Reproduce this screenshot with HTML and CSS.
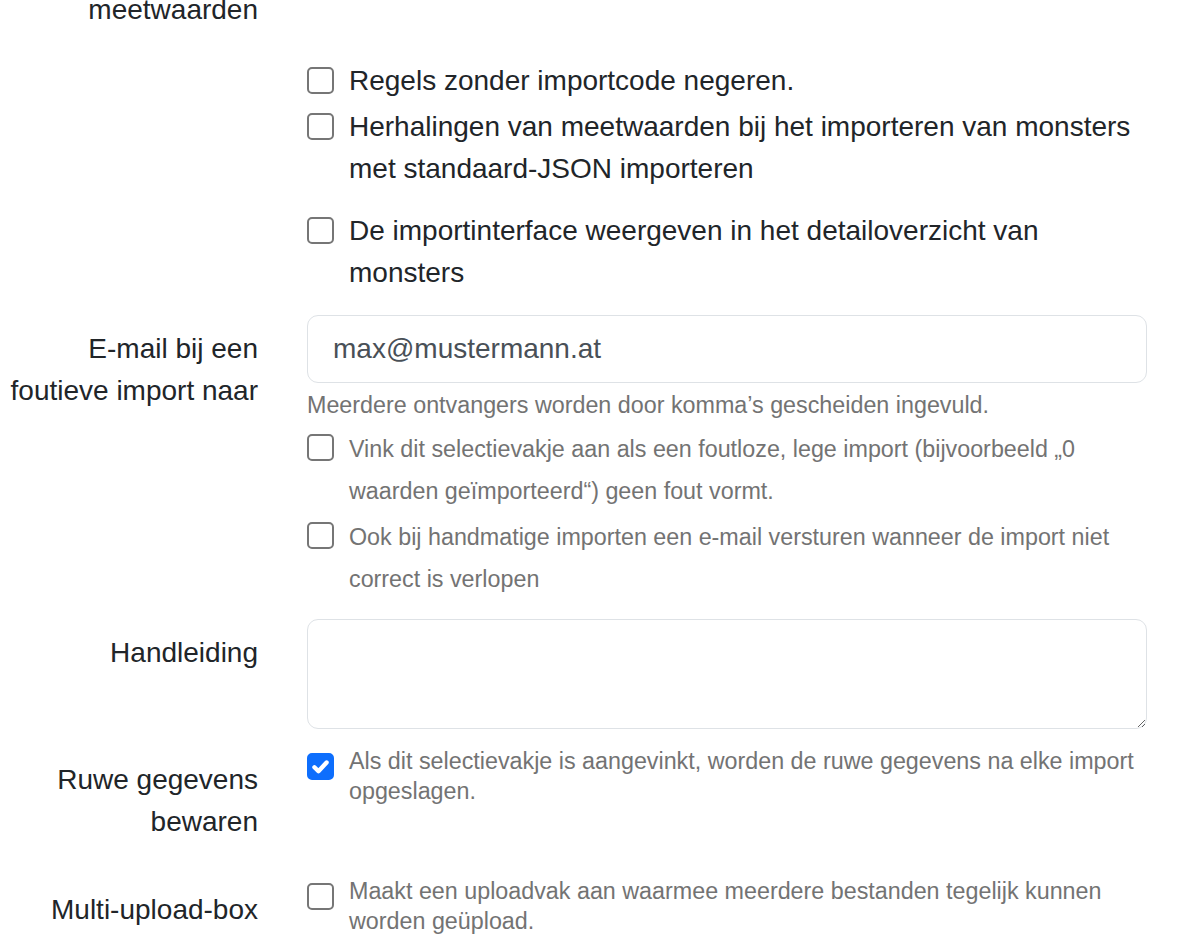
FILE: index.html
```html
<!DOCTYPE html>
<html lang="nl">
<head>
<meta charset="utf-8">
<title>Import instellingen</title>
<link rel="stylesheet" href="styles.css">
</head>
<body>
<form class="form">
  <div class="row row-top">
    <div class="label">meetwaarden</div>
    <div class="field"></div>
  </div>

  <div class="row row-checks">
    <div class="label"></div>
    <div class="field">
      <label class="check">
        <span class="box"></span>
        <span class="check-text">Regels zonder importcode negeren.</span>
      </label>
      <label class="check check-spaced">
        <span class="box"></span>
        <span class="check-text">Herhalingen van meetwaarden bij het importeren van monsters met standaard-JSON importeren</span>
      </label>
      <label class="check">
        <span class="box"></span>
        <span class="check-text">De importinterface weergeven in het detailoverzicht van monsters</span>
      </label>
    </div>
  </div>

  <div class="row row-email">
    <div class="label label-input">E-mail bij een foutieve import naar</div>
    <div class="field">
      <input class="input" type="text" value="max@mustermann.at">
      <div class="help">Meerdere ontvangers worden door komma’s gescheiden ingevuld.</div>
      <label class="check check-first">
        <span class="box"></span>
        <span class="check-text"><small class="muted">Vink dit selectievakje aan als een foutloze, lege import (bijvoorbeeld „0 waarden geïmporteerd“) geen fout vormt.</small></span>
      </label>
      <label class="check">
        <span class="box"></span>
        <span class="check-text"><small class="muted">Ook bij handmatige importen een e-mail versturen wanneer de import niet correct is verlopen</small></span>
      </label>
    </div>
  </div>

  <div class="row row-manual">
    <div class="label label-input">Handleiding</div>
    <div class="field">
      <textarea class="textarea"></textarea>
    </div>
  </div>

  <div class="row row-raw">
    <div class="label label-check">Ruwe gegevens bewaren</div>
    <div class="field">
      <label class="check check-small">
        <span class="box box-on"><svg viewBox="0 0 20 20" width="27" height="27"><path d="M5.5 10.5l3 3 6-6.5" fill="none" stroke="#fff" stroke-width="3.2" stroke-linecap="round" stroke-linejoin="round"/></svg></span>
        <span class="check-text">Als dit selectievakje is aangevinkt, worden de ruwe gegevens na elke import opgeslagen.</span>
      </label>
    </div>
  </div>

  <div class="row row-multi">
    <div class="label label-check">Multi-upload-box</div>
    <div class="field">
      <label class="check check-small">
        <span class="box"></span>
        <span class="check-text">Maakt een uploadvak aan waarmee meerdere bestanden tegelijk kunnen worden geüpload.</span>
      </label>
    </div>
  </div>
</form>
</body>
</html>
```
FILE: styles.css
```css
html, body {
  margin: 0;
  padding: 0;
  background: #ffffff;
}

body {
  font-family: "Liberation Sans", Arial, sans-serif;
  font-size: 28px;
  line-height: 42px;
  color: #212529;
  overflow: hidden;
}

.form {
  margin-top: -23px;
  width: 1147px;
}

.row {
  display: grid;
  grid-template-columns: 258px 840px;
  column-gap: 49px;
  align-items: start;
}

.label {
  text-align: right;
  padding: 12px 0;
}

.row-top { margin-bottom: 17px; }
.row-checks { margin-bottom: 21px; }
.row-email { margin-bottom: 20px; }
.row-manual { margin-bottom: 17px; }
.row-raw { margin-bottom: 21px; }

.label-input { padding-top: 13px; }
.label-check { padding-top: 13px; }

.field {
  display: flex;
  flex-direction: column;
  min-width: 0;
}

.check {
  display: flex;
  align-items: flex-start;
  gap: 15px;
  margin-bottom: 4px;
  cursor: pointer;
}

.row-checks .check:last-child,
.row-email .check:last-child,
.check-small {
  margin-bottom: 0;
}

.check-spaced { margin-bottom: 20px; }

.check-first { margin-top: 7px; }

.box {
  flex: 0 0 auto;
  box-sizing: border-box;
  width: 27px;
  height: 27px;
  margin-top: 7px;
  border: 2px solid #767676;
  border-radius: 5px;
  background: #fff;
  display: flex;
  align-items: center;
  justify-content: center;
}

.box-on {
  background: #0d6efd;
  border-color: #0d6efd;
}

.box-on svg {
  display: block;
  flex: 0 0 auto;
}

.check-text {
  flex: 1 1 auto;
  min-width: 0;
}

.muted {
  font-size: 23.3px;
  line-height: 24px;
  color: #737373;
}

.check-small .check-text {
  font-size: 23.3px;
  line-height: 30px;
  color: #737373;
}

.input {
  box-sizing: border-box;
  width: 100%;
  height: 68px;
  margin: 0;
  padding: 12px 25px;
  font-family: "Liberation Sans", Arial, sans-serif;
  font-size: 28px;
  line-height: 42px;
  color: #495057;
  background: #fff;
  border: 1.5px solid #dee2e6;
  border-radius: 11px;
  outline: none;
}

.help {
  margin-top: 7px;
  font-size: 23.3px;
  line-height: 30px;
  color: #737373;
}

.textarea {
  box-sizing: border-box;
  display: block;
  width: 100%;
  height: 110px;
  margin: 0;
  padding: 12px 25px;
  font-family: "Liberation Sans", Arial, sans-serif;
  font-size: 28px;
  line-height: 42px;
  color: #495057;
  background: #fff;
  border: 1.5px solid #dee2e6;
  border-radius: 11px;
  outline: none;
  resize: vertical;
}
```
